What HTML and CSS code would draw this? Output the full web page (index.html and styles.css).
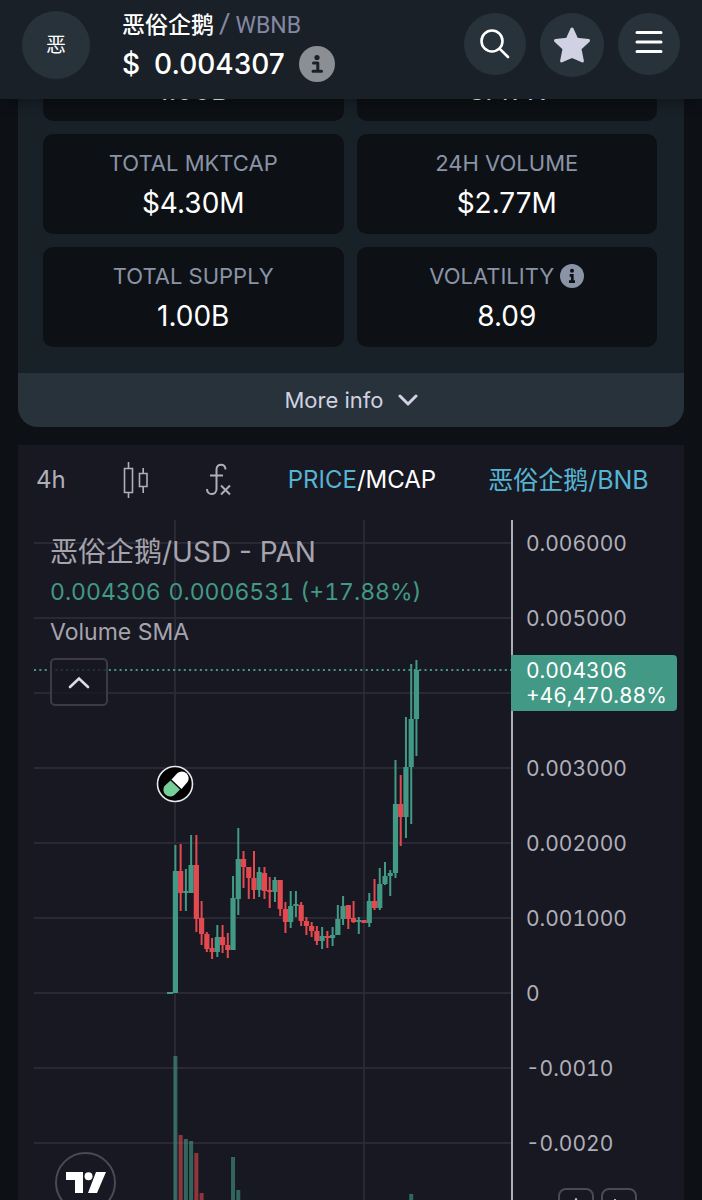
FILE: index.html
```html
<!DOCTYPE html>
<html lang="en">
<head>
    <meta charset="UTF-8">
    <meta name="viewport" content="width=device-width, initial-scale=1.0">
    <title>恶俗企鹅 / WBNB</title>
    <link rel="stylesheet" href="styles.css">
</head>
<body>
    <header class="topbar">
        <div class="avatar">恶</div>
        <div class="pair">
            <div class="pair-name">恶俗企鹅<span class="slash">/</span><span class="quote">WBNB</span></div>
            <div class="pair-price">
                <span>$</span>
                <span>0.004307</span>
                <button class="info-btn" aria-label="Price info">
                    <svg width="36" height="36" viewBox="0 0 36 36"><circle cx="18" cy="18" r="18" fill="#8b8f94"/><circle cx="18" cy="11.5" r="2.6" fill="#192027"/><path d="M14.500 17h4.300v8M14 25.200h8.500" fill="none" stroke="#192027" stroke-width="3" stroke-linecap="round" stroke-linejoin="round"/></svg>
                </button>
            </div>
        </div>
        <nav class="actions">
            <button class="round-btn" aria-label="Search">
                <svg width="30" height="30" viewBox="0 0 30 30" fill="none" stroke="#fff" stroke-width="2.600" stroke-linecap="round"><circle cx="12" cy="12" r="10.500"/><path d="M19.800 19.800L28 28"/></svg>
            </button>
            <button class="round-btn favorite" aria-label="Favorite">
                <svg width="38" height="38" viewBox="0 0 38 38"><path d="M19 3l4.800 10.300 11.700 1.300-8.600 8 2.500 12.400L19 30.300 8.600 35l2.500-12.400-8.600-8 11.700-1.300z" fill="#d0d1e2" stroke="#d0d1e2" stroke-width="3" stroke-linejoin="round"/></svg>
            </button>
            <button class="round-btn menu" aria-label="Menu">
                <svg width="28" height="24" viewBox="0 0 28 24" stroke="#fff" stroke-width="3" stroke-linecap="round"><path d="M2 2.500h24M2 12h24M2 21.500h24"/></svg>
            </button>
        </nav>
    </header>

    <main class="content">
        <section class="info-panel">
            <div class="stats">
                <div class="stat"><span class="stat-value">1.00B</span></div>
                <div class="stat"><span class="stat-value">3.47K</span></div>
                <div class="stat"><span class="stat-label">TOTAL MKTCAP</span><span class="stat-value">$4.30M</span></div>
                <div class="stat"><span class="stat-label">24H VOLUME</span><span class="stat-value">$2.77M</span></div>
                <div class="stat"><span class="stat-label">TOTAL SUPPLY</span><span class="stat-value">1.00B</span></div>
                <div class="stat">
                    <span class="stat-label">VOLATILITY
                        <svg width="24" height="24" viewBox="0 0 36 36"><circle cx="18" cy="18" r="18" fill="#8b93a7"/><circle cx="18" cy="10" r="3" fill="#0d1115"/><path d="M14.500 17h4v9M13.500 26.500h9" fill="none" stroke="#0d1115" stroke-width="4"/></svg>
                    </span>
                    <span class="stat-value">8.09</span>
                </div>
            </div>
            <button class="more-info">More info
                <svg width="20" height="12" viewBox="0 0 20 12" fill="none" stroke="#d0d1e2" stroke-width="3" stroke-linecap="round" stroke-linejoin="round"><path d="M2 2l8 8 8-8"/></svg>
            </button>
        </section>

        <section class="chart">
            <div class="toolbar">
                <button class="tool">4h</button>
                <button class="tool" aria-label="Chart type">
                    <svg width="27" height="36" viewBox="0 0 27 36" fill="none" stroke="#b0afb9" stroke-width="1.600"><path d="M2.500 6.500h8v24h-8zM6.500 0v6.500M6.500 30.500V36M17.500 11.500h7.500v13h-7.500zM21.200 6v5.500M21.200 24.500V31"/></svg>
                </button>
                <button class="tool" aria-label="Indicators">
                    <svg width="27" height="34" viewBox="0 0 27 34" fill="none" stroke="#b0afb9" stroke-width="2"><path d="M20.500 6.500c0-6.500-9-6.500-9 0v19.500c0 6.500-9.500 7-9.500 0M5 12.500h13M16 22.500l9 9M25 22.500l-9 9"/></svg>
                </button>
                <button class="tool unit"><span class="active">PRICE</span>/MCAP</button>
                <button class="tool base active">恶俗企鹅/BNB</button>
            </div>
            <div class="chart-body">
                <div class="plot">
                    <svg class="plot-svg" id="plot" width="100%" height="100%"></svg>
                    <div class="legend">
                        <div class="legend-title">恶俗企鹅/USD - PAN</div>
                        <div class="legend-values"><span>0.004306</span><span>0.0006531 (+17.88%)</span></div>
                        <div class="legend-volume">Volume SMA</div>
                        <button class="collapse" aria-label="Collapse legend">
                            <svg width="22" height="13" viewBox="0 0 22 13" fill="none" stroke="#dcdce6" stroke-width="2.600" stroke-linecap="round"><path d="M2 11l9-8.500 9 8.500"/></svg>
                        </button>
                    </div>
                    <a class="tv-logo" href="#" aria-label="TradingView">
                        <svg width="40" height="21" viewBox="0 0 40 21" fill="#fff"><path d="M0 0h17v21H9V8H0zM30 0h10l-9 21H22z"/><circle cx="22.500" cy="4.200" r="4"/></svg>
                    </a>
                </div>
                <div class="axis">
                    <ul class="prices">
                        <li>0.006000</li>
                        <li>0.005000</li>
                        <li></li>
                        <li>0.003000</li>
                        <li>0.002000</li>
                        <li>0.001000</li>
                        <li>0</li>
                        <li>-0.0010</li>
                        <li>-0.0020</li>
                    </ul>
                    <div class="price-tag">0.004306<br>+46,470.88%</div>
                    <div class="scale-btns">
                        <button class="scale-btn" aria-label="Auto scale"><svg width="16" height="16" viewBox="0 0 16 16" fill="none" stroke="#b0afb9" stroke-width="2"><path d="M3 15L8 1l5 14M5 10h6"/></svg></button>
                        <button class="scale-btn" aria-label="Log scale"><svg width="16" height="16" viewBox="0 0 16 16" fill="none" stroke="#b0afb9" stroke-width="2"><path d="M4 1v14h9"/></svg></button>
                    </div>
                </div>
            </div>
        </section>
    </main>
    <script src="chart.js"></script>
</body>
</html>
```
FILE: styles.css
```css
* {
    box-sizing: border-box;
}
body {
    display: flex;
    flex-direction: column;
    height: 100vh;
    margin: 0;
    overflow: hidden;
    background: #0d1115;
    color: #fff;
    font-family: Inter, "Noto Sans CJK SC", sans-serif;
}
button {
    padding: 0;
    border: 0;
    background: transparent;
    color: inherit;
    font: inherit;
    cursor: pointer;
}
svg {
    display: block;
}

/* header */
.topbar {
    position: sticky;
    top: 0;
    z-index: 2;
    display: flex;
    align-items: center;
    flex: none;
    padding: 6px 22px 15px;
    background: #192027;
    box-shadow: 0 2px 14px rgba(0, 0, 0, 0.4);
}
.avatar {
    display: flex;
    align-items: center;
    justify-content: center;
    width: 68px;
    height: 68px;
    border-radius: 50%;
    background: #27323b;
    font-size: 20px;
    line-height: 24px;
}
.pair {
    flex: 1;
    margin-left: 32px;
}
.pair-name {
    font-size: 23px;
    font-weight: 500;
    line-height: 36px;
}
.slash,
.quote {
    color: #8388a4;
    font-weight: 400;
    font-family: Roboto, sans-serif;
}
.slash {
    margin: 0 5px;
    font-size: 28px;
}
.pair-price {
    display: flex;
    align-items: center;
    gap: 14px;
    font-size: 28px;
    font-weight: 500;
    line-height: 40px;
}
.actions {
    display: flex;
    gap: 14px;
}
.round-btn {
    display: flex;
    align-items: center;
    justify-content: center;
    width: 62px;
    height: 62px;
    border-radius: 50%;
    background: #27323b;
}
.favorite {
    width: 64px;
    height: 64px;
}
.menu {
    padding-bottom: 4px;
}

/* token info */
.content {
    display: flex;
    flex: 1;
    flex-direction: column;
    gap: 18px;
    min-height: 0;
    padding: 0 18px;
}
.info-panel {
    flex: none;
    margin-top: -103px;
    overflow: hidden;
    border-radius: 20px;
    background: #182128;
}
.stats {
    display: grid;
    grid-template-columns: 1fr 1fr;
    gap: 13px;
    padding: 25px 27px 26px 25px;
}
.stat {
    display: flex;
    flex-direction: column;
    align-items: center;
    justify-content: flex-end;
    min-height: 100px;
    padding: 10px;
    border-radius: 10px;
    background: #0d1115;
}
.stat-label {
    display: flex;
    align-items: center;
    gap: 6px;
    color: #8b93a7;
    font-size: 22px;
    line-height: 38px;
}
.stat-value {
    font-size: 28px;
    line-height: 42px;
}
.more-info {
    display: flex;
    align-items: center;
    justify-content: center;
    gap: 14px;
    width: 100%;
    height: 54px;
    background: #27323b;
    color: #d0d1e2;
    font-size: 22px;
}

/* chart */
.chart {
    display: flex;
    flex: 1;
    flex-direction: column;
    min-height: 0;
    background: #181822;
}
.toolbar {
    display: flex;
    align-items: center;
    gap: 56px;
    height: 69px;
    padding: 0 36px 0 18px;
    color: #b0afb9;
    font-size: 24px;
    line-height: 36px;
    white-space: nowrap;
}
.unit {
    color: #fff;
}
.active {
    color: #56b4d3;
}
.base {
    margin-left: -4px;
    font-size: 25px;
}
.chart-body {
    display: flex;
    flex: 1;
    min-height: 0;
    margin-top: 6px;
    overflow: hidden;
}
.plot {
    position: relative;
    flex: 1;
}
.plot-svg {
    position: absolute;
}
.legend {
    position: relative;
    padding: 12px 32px;
    color: #a5a4ae;
}
.legend-title {
    font-size: 28px;
    line-height: 40px;
}
.legend-values {
    display: flex;
    gap: 8px;
    color: #429985;
    font-size: 23px;
    font-variant-numeric: tabular-nums;
    line-height: 40px;
}
.legend-volume {
    font-size: 23px;
    line-height: 40px;
}
.collapse {
    display: flex;
    align-items: center;
    justify-content: center;
    width: 58px;
    height: 48px;
    margin-top: 6px;
    border: 2px solid #3b3a46;
    border-radius: 5px;
    background: rgba(24, 24, 34, 0.8);
}
.tv-logo {
    position: absolute;
    top: 632px;
    left: 37px;
    display: flex;
    align-items: center;
    justify-content: center;
    width: 61px;
    height: 61px;
    border: 2px solid #4a4954;
    border-radius: 50%;
    background: #181822;
}
.axis {
    position: relative;
    width: 173px;
    border-left: 2px solid #aeadb8;
    font-size: 21px;
    font-variant-numeric: tabular-nums;
}
.prices {
    display: flex;
    flex-direction: column;
    gap: 51px;
    margin: 0;
    padding: 12px 0 0 13px;
    color: #b0afb9;
    line-height: 24px;
    list-style: none;
}
.prices li {
    height: 24px;
}
.price-tag {
    position: absolute;
    top: 135px;
    left: -2px;
    padding: 3px 10px 3px 15px;
    border-radius: 0 4px 4px 0;
    background: #429985;
    line-height: 25px;
}
.scale-btns {
    position: absolute;
    top: 668px;
    right: 47px;
    display: flex;
    gap: 7px;
}
.scale-btn {
    display: flex;
    align-items: center;
    justify-content: center;
    width: 36px;
    height: 36px;
    border: 2px solid #4a4954;
    border-radius: 8px;
}
```
FILE: chart.js
```js
const GREEN = '#429985';
const RED = '#e24a50';
const GRID = '#292833';

// [up, high, body top, body bottom, low]
const candles = [
    [1, 325, 351, 473, 473], [0, 324, 351, 373, 391], [1, 349, 371, 373, 391],
    [1, 315, 345, 373, 373], [0, 315, 345, 399, 412], [0, 381, 398, 414, 425],
    [0, 412, 414, 429, 432], [0, 418, 428, 432, 439], [1, 405, 417, 432, 437],
    [0, 405, 417, 425, 433], [0, 413, 425, 430, 438], [1, 356, 378, 430, 430],
    [1, 308, 339, 379, 395], [0, 331, 339, 347, 368], [0, 347, 347, 358, 379],
    [0, 331, 358, 370, 379], [1, 347, 352, 370, 377], [0, 347, 353, 371, 379],
    [0, 357, 370, 372, 388], [1, 357, 360, 372, 382], [0, 360, 360, 389, 396],
    [0, 382, 389, 402, 413], [1, 371, 386, 402, 408], [1, 371, 384, 386, 397],
    [0, 382, 385, 401, 406], [0, 397, 401, 406, 415], [0, 402, 406, 411, 417],
    [0, 406, 411, 421, 425], [1, 407, 416, 421, 429], [0, 411, 416, 417, 428],
    [1, 407, 415, 418, 426], [1, 385, 399, 415, 415], [1, 376, 386, 399, 405],
    [0, 385, 385, 399, 409], [0, 381, 398, 402, 403], [1, 397, 400, 401, 414],
    [0, 400, 400, 403, 403], [1, 373, 381, 403, 407], [0, 359, 381, 388, 390],
    [1, 348, 364, 388, 390], [1, 342, 356, 364, 365], [1, 350, 353, 356, 376],
    [1, 240, 284, 353, 358], [0, 255, 284, 297, 326], [1, 197, 247, 297, 318],
    [1, 144, 199, 247, 304], [1, 140, 150, 199, 236]
];

// [candle index, top, up]
const volumes = [
    [0, 536, 1], [1, 615, 0], [2, 619, 1], [3, 621, 1], [4, 633, 0],
    [5, 673, 0], [11, 637, 1], [12, 670, 1], [45, 674, 1]
];

const plot = document.getElementById('plot');

function add(name, attrs) {
    const el = document.createElementNS('http://www.w3.org/2000/svg', name);
    for (const key in attrs) {
        el.setAttribute(key, attrs[key]);
    }
    plot.appendChild(el);
}

function candleX(i) {
    return 157.4 + i * 5.24;
}

// grid
for (let i = 0; i < 9; i++) {
    const y = 23 + i * 75;
    add('line', { x1: 16, x2: '100%', y1: y, y2: y, stroke: GRID, 'stroke-width': 2 });
}
[157, 346].forEach(x => {
    add('line', { x1: x, x2: x, y1: 0, y2: '100%', stroke: GRID, 'stroke-width': 2 });
});

// volume
volumes.forEach(([i, top, up]) => {
    add('rect', { x: candleX(i) - 2, y: top, width: 4, height: 200, fill: up ? GREEN : RED, opacity: 0.6 });
});

// last price
add('line', { x1: 16, x2: '100%', y1: 150, y2: 150, stroke: GREEN, 'stroke-width': 2, 'stroke-dasharray': '2 3.35' });

// candles
add('rect', { x: 149, y: 472, width: 6, height: 2, fill: GREEN });
candles.forEach(([up, high, top, bottom, low], i) => {
    const x = candleX(i);
    const fill = up ? GREEN : RED;
    add('rect', { x: x - 1, y: high, width: 2, height: low - high, fill });
    add('rect', { x: x - 2.6, y: top, width: 5.2, height: Math.max(bottom - top, 2), fill });
});

// launch marker
add('circle', { cx: 157, cy: 264, r: 17.5, fill: '#000', stroke: '#e6e6ea', 'stroke-width': 1.6 });
add('path', { d: 'M153.500 259.500l6-6.500a6.800 6.800 0 0 1 10 9l-6 7z', fill: '#fff' });
add('path', { d: 'M152.500 260.500l9.500 9-5.500 5.500a6.800 6.800 0 0 1-10-9z', fill: '#76ce98' });
```
